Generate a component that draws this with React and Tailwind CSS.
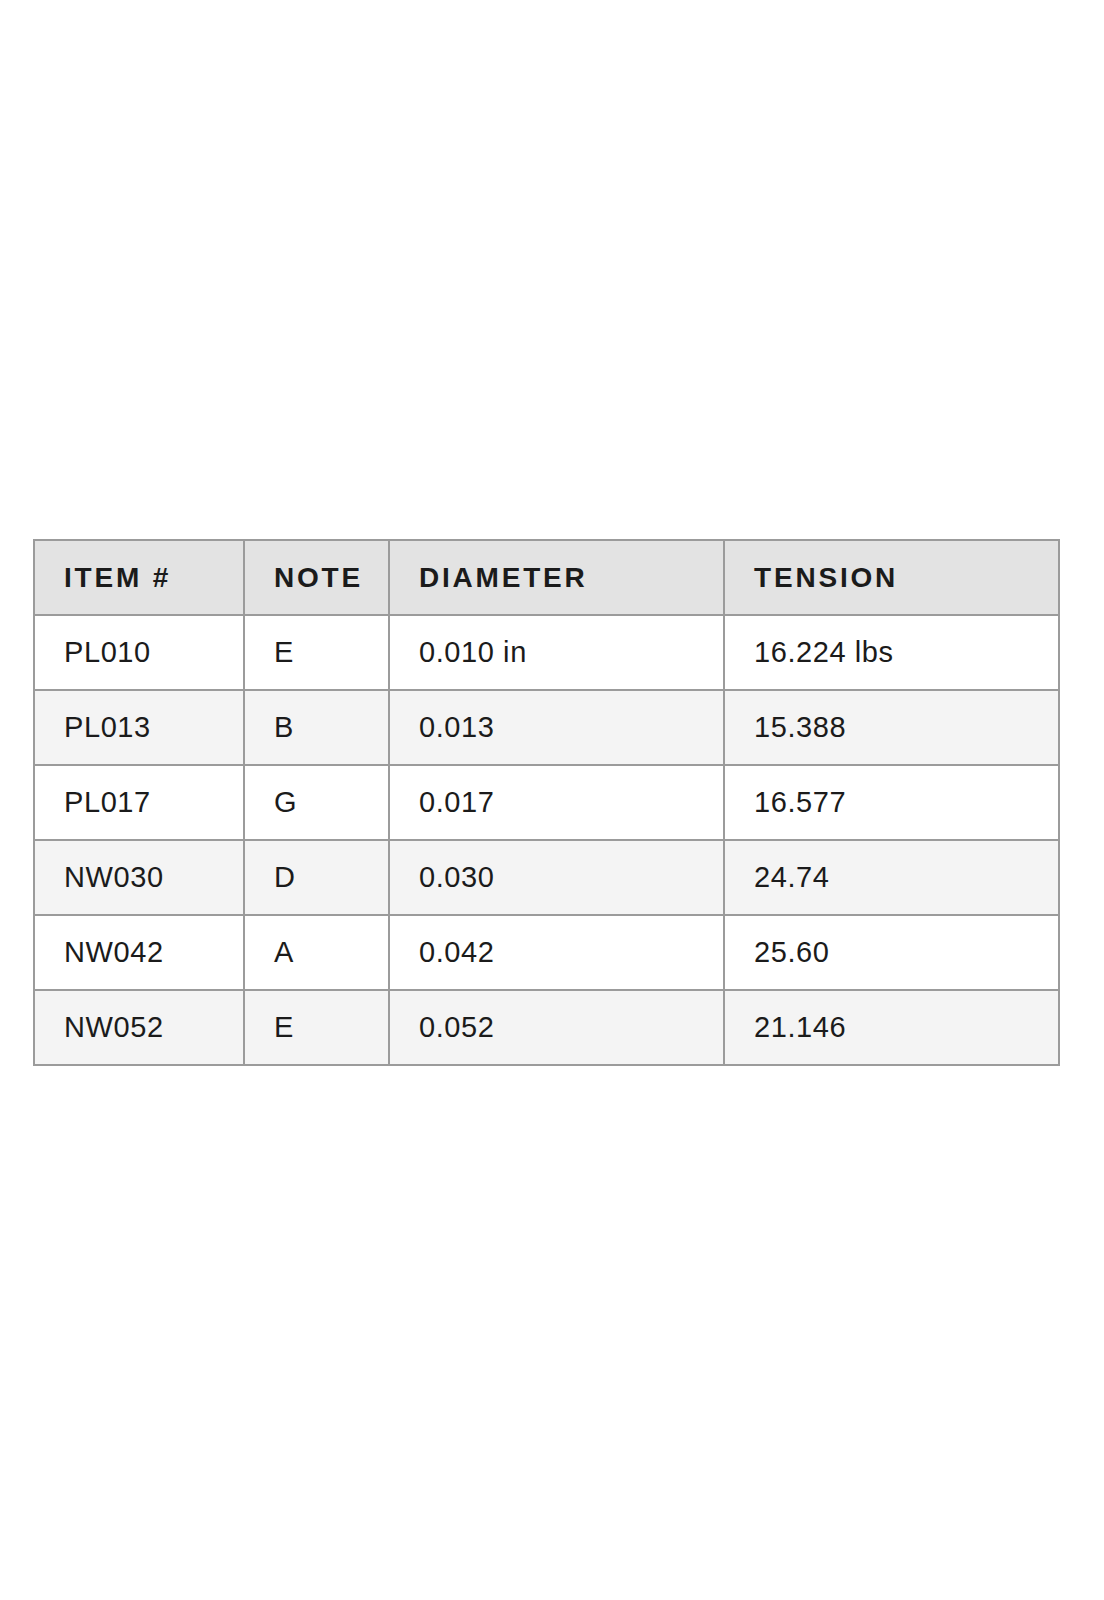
const HEADERS = ['ITEM #', 'NOTE', 'DIAMETER', 'TENSION'];

const ROWS = [
  ['PL010', 'E', '0.010 in', '16.224 lbs'],
  ['PL013', 'B', '0.013', '15.388'],
  ['PL017', 'G', '0.017', '16.577'],
  ['NW030', 'D', '0.030', '24.74'],
  ['NW042', 'A', '0.042', '25.60'],
  ['NW052', 'E', '0.052', '21.146'],
];

const App = () => {
  return (
    <div
      className="min-h-[1600px] bg-white text-[#1b1b1b]"
      style={{ fontFamily: '"Liberation Sans", Arial, sans-serif' }}
    >
      <div className="pt-[539px] pl-[33px]">
        <table className="table-fixed border-collapse border-2 border-[#9b9b9b] w-[1025px]">
          <colgroup>
            <col className="w-[210px]" />
            <col className="w-[145px]" />
            <col className="w-[335px]" />
            <col className="w-[335px]" />
          </colgroup>
          <thead>
            <tr className="bg-[#e3e3e3] h-[75px]">
              {HEADERS.map((h) => (
                <th
                  key={h}
                  className="border-2 border-[#9b9b9b] pl-[29px] text-left text-[28px] font-bold tracking-[0.1em] leading-none"
                >
                  {h}
                </th>
              ))}
            </tr>
          </thead>
          <tbody>
            {ROWS.map((row, i) => (
              <tr key={row[0]} className={`h-[75px] ${i % 2 === 1 ? 'bg-[#f4f4f4]' : 'bg-white'}`}>
                {row.map((cell, j) => (
                  <td
                    key={j}
                    className="border-2 border-[#9b9b9b] pl-[29px] text-[29px] tracking-[0.02em] leading-none"
                  >
                    {cell}
                  </td>
                ))}
              </tr>
            ))}
          </tbody>
        </table>
      </div>
    </div>
  );
};

export default App;
